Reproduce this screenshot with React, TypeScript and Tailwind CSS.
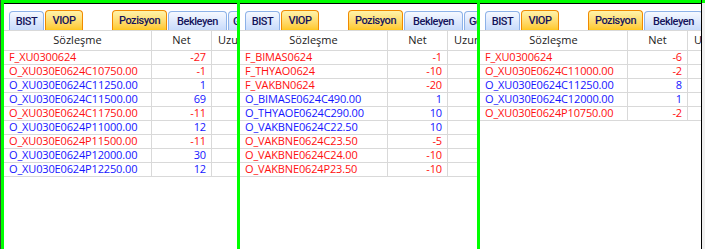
import React from "react";

type Row = [string, number];

const p1: Row[] = [
  ["F_XU0300624", -27],
  ["O_XU030E0624C10750.00", -1],
  ["O_XU030E0624C11250.00", 1],
  ["O_XU030E0624C11500.00", 69],
  ["O_XU030E0624C11750.00", -11],
  ["O_XU030E0624P11000.00", 12],
  ["O_XU030E0624P11500.00", -11],
  ["O_XU030E0624P12000.00", 30],
  ["O_XU030E0624P12250.00", 12],
];
const p2: Row[] = [
  ["F_BIMAS0624", -1],
  ["F_THYAO0624", -10],
  ["F_VAKBN0624", -20],
  ["O_BIMASE0624C490.00", 1],
  ["O_THYAOE0624C290.00", 10],
  ["O_VAKBNE0624C22.50", 10],
  ["O_VAKBNE0624C23.50", -5],
  ["O_VAKBNE0624C24.00", -10],
  ["O_VAKBNE0624P23.50", -10],
];
const p3: Row[] = [
  ["F_XU0300624", -6],
  ["O_XU030E0624C11000.00", -2],
  ["O_XU030E0624C11250.00", 8],
  ["O_XU030E0624C12000.00", 1],
  ["O_XU030E0624P10750.00", -2],
];

const tabBase =
  "h-[19px] flex items-center justify-center border border-b-0 rounded-t-[4px] text-[11px] font-medium tracking-[-0.45px] text-[#14145c] leading-none overflow-hidden whitespace-nowrap shrink-0";
const tabOff = "border-[#8db2e8] bg-gradient-to-b from-[#f6f9ff] to-[#c8dbfb]";
const tabOn = "border-[#f08a00] bg-gradient-to-b from-[#fff3a8] to-[#ffc81e]";

function Panel({ w, rows }: { w: string; rows: Row[] }) {
  return (
    <div className={`${w} h-full bg-white border-t border-black flex flex-col overflow-hidden shrink-0`}>
      <div
        className="h-[26px] flex items-end pl-[5px] shrink-0"
        style={{ fontFamily: "Roboto, 'Liberation Sans', sans-serif" }}
      >
        <div className={`${tabBase} ${tabOff} w-[35px]`}>BIST</div>
        <div className={`${tabBase} ${tabOn} w-[38px] ml-px h-[20px]`}>VIOP</div>
        <div className={`${tabBase} ${tabOn} w-[55px] ml-[29px] h-[20px]`}>Pozisyon</div>
        <div className={`${tabBase} ${tabOff} w-[59px] ml-px`}>Bekleyen</div>
        <div className={`${tabBase} ${tabOff} w-[70px] ml-px justify-start pl-[4px]`}>Gerçekleşen</div>
      </div>
      <div className="h-[21px] flex border-y border-[#d9d9d9] text-[11px] text-[#1a1a1a] shrink-0">
        <div className="w-[148px] border-r border-[#d9d9d9] flex items-center justify-center shrink-0">Sözleşme</div>
        <div className="w-[60px] border-r border-[#d9d9d9] flex items-center justify-center shrink-0">Net</div>
        <div className="flex-1 flex items-center pl-[6px] whitespace-nowrap overflow-hidden">Uzun</div>
      </div>
      {rows.map(([name, net], i) => {
        const c = net < 0 ? "text-[#ff1010]" : "text-[#1515ff]";
        return (
          <div
            key={i}
            className={`h-[14px] flex border-b border-[#d9d9d9] text-[11px] tracking-[-0.15px] shrink-0 ${c}`}
          >
            <div className="w-[148px] border-r border-[#d9d9d9] flex items-center pl-[5px] whitespace-nowrap shrink-0">{name}</div>
            <div className="w-[60px] border-r border-[#d9d9d9] flex items-center justify-end pr-[5px] shrink-0">{net}</div>
            <div className="flex-1" />
          </div>
        );
      })}
    </div>
  );
}

export default function App() {
  return (
    <div
      className="w-[705px] h-[249px] flex bg-[#00ff00] overflow-hidden pt-[3px]"
      style={{ fontFamily: "'Open Sans', 'Noto Sans', sans-serif" }}
    >
      <div className="w-px h-[252px] bg-[#3a3a3a] -mt-[3px] shrink-0" />
      <div className="w-[3px] shrink-0" />
      <Panel w="w-[233px]" rows={p1} />
      <div className="w-[3px] shrink-0" />
      <Panel w="w-[237px]" rows={p2} />
      <div className="w-[3px] shrink-0" />
      <Panel w="w-[221px]" rows={p3} />
      <div className="w-px bg-black -mt-[3px] h-[252px] shrink-0" />
      <div className="flex-1 bg-[#f0f0f0]" />
    </div>
  );
}
